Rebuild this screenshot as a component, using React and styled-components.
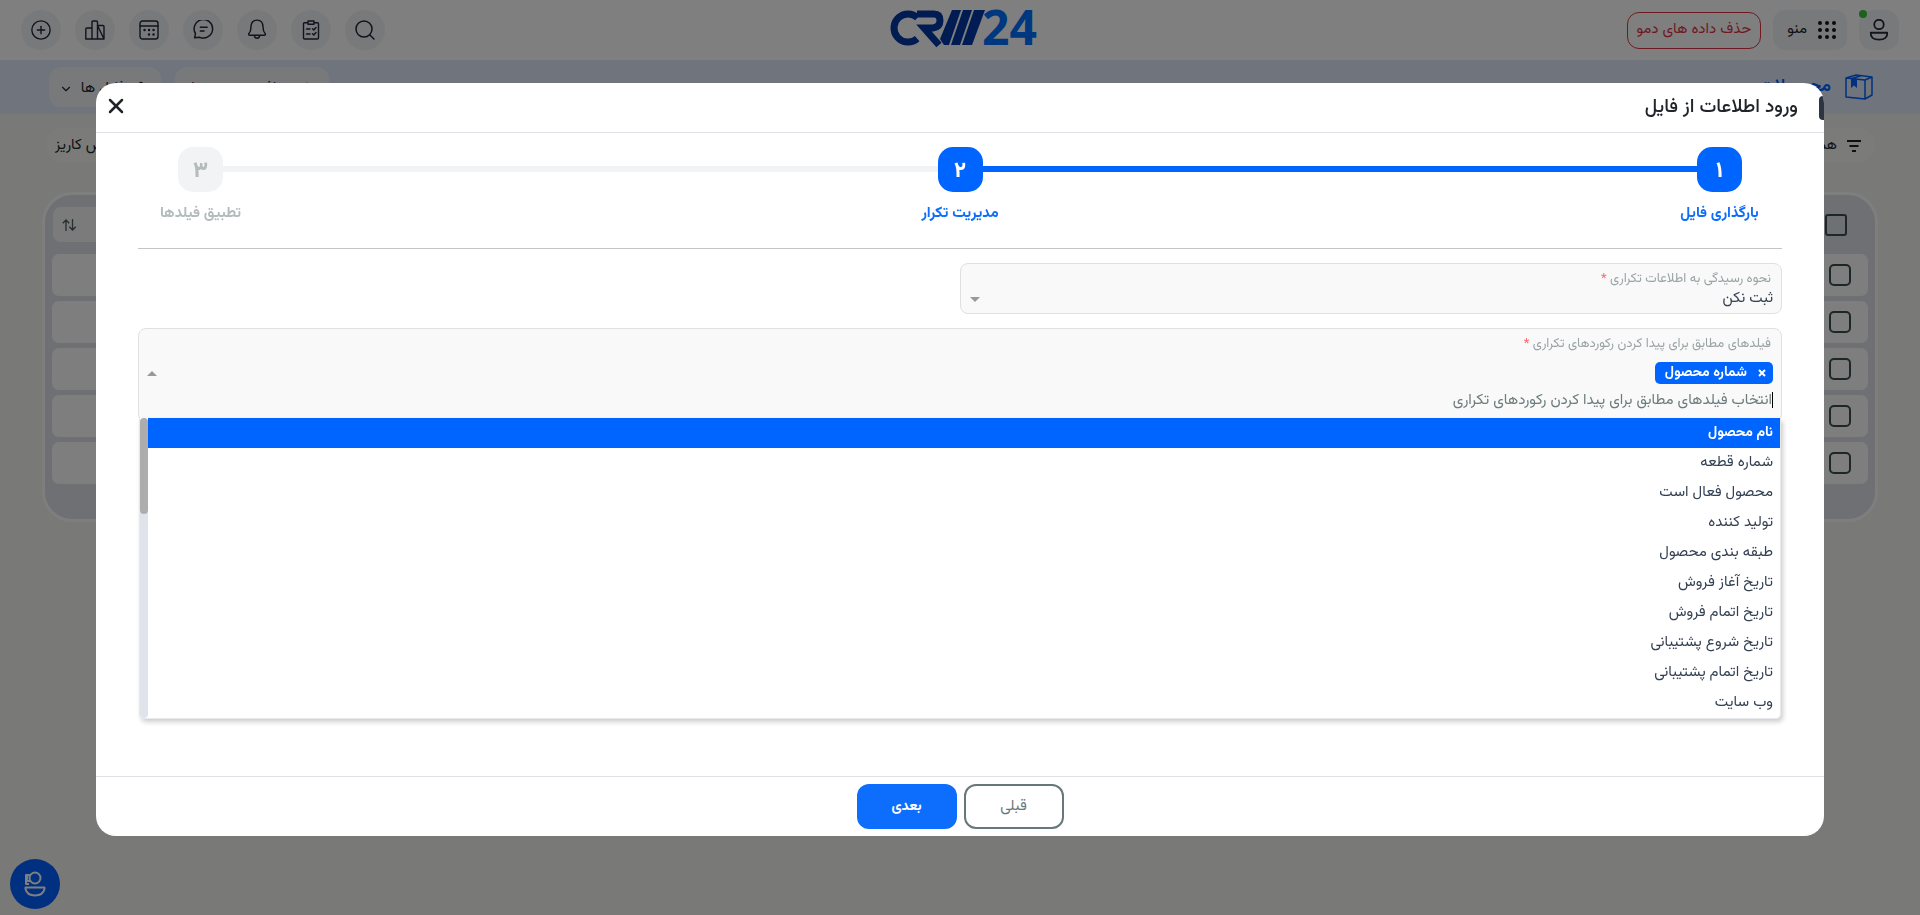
import React from "react";
import styled, { createGlobalStyle, css } from "styled-components";
import { Search, CirclePlus, ChevronDown, Settings, Plus, X } from "lucide-react";

const GlobalStyle = createGlobalStyle`
  *, *::before, *::after { box-sizing: border-box; }
  html { background: #f3f2ee; }
  body {
    margin: 0;
    overflow: hidden;
    color: #212529;
    font: 400 15px/20px Vazirmatn, "DejaVu Sans", sans-serif;
  }
  button, input, select { font: inherit; color: inherit; margin: 0; }
  button { cursor: pointer; }
`;

/* ---------- page behind the dialog ---------- */

const TopBar = styled.header`
  display: grid;
  grid-template-columns: 1fr auto 1fr;
  align-items: center;
  height: 60px;
  padding: 0 21px;
  background: #fff;
`;

const BarGroup = styled.div`
  display: flex;
  align-items: center;
  gap: ${(p) => (p.$tight ? 12 : 14)}px;
  justify-content: ${(p) => (p.$end ? "flex-end" : "flex-start")};
`;

const IconButton = styled.button`
  position: relative;
  display: grid;
  place-items: center;
  width: 40px;
  height: 40px;
  padding: 0;
  border: 0;
  border-radius: ${(p) => (p.$square ? 14 : 20)}px;
  background: #f1f3f6;
  color: #22263a;
`;

const OnlineDot = styled.span`
  position: absolute;
  top: 0;
  left: 0;
  width: 8px;
  height: 8px;
  border-radius: 50%;
  background: #38c43a;
`;

const MenuButton = styled.button`
  display: flex;
  align-items: center;
  gap: 11px;
  height: 40px;
  padding: 0 11px 0 14px;
  border: 0;
  border-radius: 12px;
  background: #f1f3f6;
`;

const DangerButton = styled.button`
  height: 37px;
  padding: 0 9px;
  border: 1px solid #dc3545;
  border-radius: 12px;
  background: transparent;
  color: #dc3545;
`;

const TitleBand = styled.div`
  display: flex;
  align-items: center;
  justify-content: space-between;
  height: 54px;
  padding: 0 47px 0 49px;
  background: #e0e9fb;
`;

const PageTitle = styled.h1`
  display: flex;
  align-items: center;
  gap: 14px;
  margin: 0;
  color: #0060ff;
  font-size: 18px;
  font-weight: 600;
`;

const BandButton = styled.button`
  display: flex;
  align-items: center;
  justify-content: space-between;
  height: 40px;
  min-width: ${(p) => (p.$wide ? 154 : 112)}px;
  padding: 4px 12px 0 10px;
  border: 0;
  border-radius: 12px;
  background: #eff3f5;
`;

const FilterRow = styled.div`
  display: flex;
  justify-content: space-between;
  padding: 14px 45px 29px 46px;
`;

const Pill = styled.button`
  display: flex;
  align-items: center;
  gap: 10px;
  height: 35px;
  padding: 0 ${(p) => (p.$filter ? 14 : 9)}px;
  border: 0;
  border-radius: 18px;
  background: #f7f7f3;
`;

const TablePanel = styled.section`
  margin: 0 42px;
  padding: 7px 7px 30px;
  border: 3px solid #fdfdfd;
  border-radius: 30px;
  background: #dfe1e6;
`;

const RecordTable = styled.table`
  width: 100%;
  border-collapse: separate;
  border-spacing: 0 5px;
`;

const HeadCell = styled.th`
  height: 42px;
  padding: ${(p) => (p.$check ? "0 21px 7px 0" : "0 0 7px 1px")};
  width: ${(p) => (p.$check ? "60px" : "auto")};
  text-align: start;
`;

const HeadLabel = styled.div`
  display: flex;
  align-items: center;
  justify-content: flex-end;
  height: 35px;
  padding: 0 9px;
  border-radius: 8px;
  background: #f6f7f8;
`;

const BodyCell = styled.td`
  height: 42px;
  padding: 0 17px 0 0;
  background: #fdfdfd;
  &:first-child { border-radius: 0 7px 7px 0; }
  &:last-child { border-radius: 7px 0 0 7px; }
`;

const RowCheck = styled.input`
  appearance: none;
  display: block;
  width: 22px;
  height: 22px;
  margin: 0;
  border: 2px solid #38504e;
  border-radius: ${(p) => (p.$head ? 3 : 5)}px;
`;

const HelpButton = styled.button`
  position: fixed;
  left: 10px;
  bottom: 6px;
  display: grid;
  place-items: center;
  width: 50px;
  height: 50px;
  padding: 0;
  border: 0;
  border-radius: 50%;
  background: #0060ff;
  color: #fff;
`;

/* ---------- dialog ---------- */

const Backdrop = styled.div`
  position: fixed;
  inset: 0;
  padding: 83px 5% 0;
  background: rgba(0, 0, 0, 0.5);
`;

const Dialog = styled.section`
  position: relative;
  overflow: hidden;
  border-radius: 20px;
  background: #fff;
`;

const EdgeTooltip = styled.span`
  position: absolute;
  top: 13px;
  right: 0;
  width: 5px;
  height: 24px;
  border-radius: 4px 0 0 4px;
  background: #2f3441;
`;

const DialogHeader = styled.header`
  display: flex;
  align-items: center;
  justify-content: space-between;
  height: 50px;
  padding: 0 26px 0 6px;
  border-bottom: 1px solid #dee2e6;
`;

const DialogTitle = styled.h2`
  margin: 0;
  font-size: 19px;
  font-weight: 500;
`;

const CloseButton = styled.button`
  display: grid;
  place-items: center;
  width: 28px;
  height: 28px;
  padding: 0 0 4px;
  border: 0;
  background: none;
`;

const DialogBody = styled.form`
  padding: 14px 42px 57px;
`;

const StepList = styled.ol`
  display: flex;
  margin: 0 0 14px;
  padding: 0 0 22px;
  list-style: none;
  border-bottom: 1px solid #c4c4c4;
`;

const Step = styled.li`
  display: flex;
  flex-direction: column;
  align-items: center;
  gap: 10px;
  width: 125px;
  color: ${(p) => (p.$active ? "#0d6efd" : "#b4bbbd")};
  font-weight: 700;
  line-height: 24px;
`;

const StepNumber = styled.span`
  display: grid;
  place-items: center;
  width: 45px;
  height: 45px;
  padding-top: 4px;
  border-radius: 15px;
  font-size: 22px;
  font-weight: 800;
  ${(p) =>
    p.$active
      ? css`background: #0065ff; color: #fff;`
      : css`background: #f1f3f5; color: #b4bbbd;`}
`;

const StepLine = styled.li`
  flex: 1;
  height: 6px;
  margin: 19px -40px 0;
  background: ${(p) => (p.$active ? "#0065ff" : "#f1f3f5")};
`;

const fieldBox = css`
  border: 1px solid #dee0e4;
  border-radius: 8px;
  background: #f9f9f9;
`;

const SelectField = styled.div`
  ${fieldBox}
  display: grid;
  grid-template-rows: 20px 20px;
  width: 50%;
  height: 51px;
  margin-bottom: 14px;
  padding: 5px 8px 4px 9px;
`;

const FieldLabel = styled.label`
  display: block;
  padding-right: 2px;
  color: #9aa3a5;
  font-size: 13px;
  line-height: 20px;
`;

const Required = styled.span`
  color: #f66;
`;

const SelectLine = styled.div`
  display: flex;
  align-items: center;
  justify-content: space-between;
`;

const Select = styled.select`
  appearance: none;
  flex: 1;
  height: 20px;
  padding: 0;
  border: 0;
  background: transparent;
  color: #344154;
  line-height: 20px;
`;

const Arrow = styled.span`
  width: 0;
  height: 0;
  border: 5px solid transparent;
  ${(p) =>
    p.$up
      ? css`border-top: 0; border-bottom-color: #999;`
      : css`border-bottom: 0; border-top-color: #999;`}
`;

const MultiField = styled.div`
  ${fieldBox}
  display: flex;
  align-items: center;
  height: 94px;
  padding: 5px 8px 9px;
`;

const MultiMain = styled.div`
  flex: 1;
`;

const Tag = styled.span`
  display: flex;
  align-items: center;
  gap: 11px;
  width: fit-content;
  height: 22px;
  margin: 8px 0 4px;
  padding: 0 7px 0 10px;
  border-radius: 5px;
  background: #0065ff;
  color: #fff;
  font-size: 14px;
  font-weight: 700;
`;

const TagRemove = styled.button`
  display: grid;
  place-items: center;
  width: 8px;
  height: 20px;
  padding: 0;
  border: 0;
  background: none;
  color: inherit;
`;

const SearchLine = styled.div`
  display: flex;
  align-items: center;
`;

const Cursor = styled.span`
  width: 1px;
  height: 16px;
  background: #000;
`;

const SearchInput = styled.input`
  flex: 1;
  height: 24px;
  padding: 0;
  border: 0;
  outline: 0;
  background: transparent;
  &::placeholder { color: #6c7b7b; opacity: 1; }
`;

const Dropdown = styled.div`
  position: relative;
  display: flex;
  margin: -4px 1px 0;
  border: solid #e8e8ea;
  border-width: 0 1px 1px;
  border-radius: 0 0 5px 5px;
  background: #fff;
  box-shadow: 2px 3px 5px rgba(0, 0, 0, 0.2);
`;

const OptionList = styled.ul`
  flex: 1;
  margin: 0;
  padding: 0;
  list-style: none;
`;

const Option = styled.li`
  padding: 0 7px;
  line-height: 30px;
  color: #344154;
  ${(p) =>
    p.$current &&
    css`
      background: #0065ff;
      color: #fff;
      font-size: 14px;
      font-weight: 700;
    `}
`;

const ScrollTrack = styled.div`
  width: 8px;
  border-radius: 4px;
  background: #e0e3e9;
`;

const ScrollThumb = styled.div`
  height: 32%;
  border-radius: 4px;
  background: #adadad;
`;

const DialogFooter = styled.footer`
  display: flex;
  justify-content: center;
  gap: 7px;
  padding: 7px;
  border-top: 1px solid #dee2e6;
`;

const FooterButton = styled.button`
  width: 100px;
  height: 45px;
  border-radius: 12px;
  ${(p) =>
    p.$primary
      ? css`border: 0; background: #0d6efd; color: #fff; font-size: 14px; font-weight: 700;`
      : css`border: 2px solid #667877; background: #fff; color: #6a7877;`}
`;

/* ---------- drawings ---------- */

const Svg = ({ size = 20, w = 1.5, children }) => (
  <svg width={size} height={size} viewBox="0 0 20 20" fill="none" stroke="currentColor" strokeWidth={w} strokeLinecap="round" strokeLinejoin="round" aria-hidden="true">
    {children}
  </svg>
);

const ChartIcon = () => (
  <Svg w={1.4}>
    <path d="M.8 19V9Q.8 8 1.800 8H7V19M7 19V2Q7 1 8 1H11.500Q12.500 1 12.500 2V19M12.500 5.500H18Q19 5.500 19 6.500V19ZM.8 19H19" />
  </Svg>
);

const CalendarIcon = () => (
  <Svg w={1.4}>
    <rect x="1" y="1" width="18" height="18" rx="2.500" />
    <path d="M1 6H19" />
    <path d="M5.500 10h.1M10 10h.1M14.500 10h.1M10 14.500h.1M14.500 14.500h.1" strokeWidth="2.400" />
  </Svg>
);

const ChatIcon = () => (
  <Svg size={21} w={1.4}>
    <path d="M1.500 17 2.400 13A8.800 8.800 0 1 1 6.500 16.500ZM7 7H13.500M7 10.500H10.500" />
  </Svg>
);

const TasksIcon = () => (
  <Svg w={1.4}>
    <path d="M6 2.800H3.500Q2.500 2.800 2.500 3.800V18Q2.500 19 3.500 19H16.500Q17.500 19 17.500 18V3.800Q17.500 2.800 16.500 2.800H14M7 1H13V4.300H7Z" />
    <path d="M5.500 9H9M5.500 14H9M11.500 8.800 12.800 10 15 7.500M11.500 13.800 12.800 15 15 12.500" />
  </Svg>
);

const BellIcon = () => (
  <Svg size={22} w={1.3}>
    <path d="M2.500 13.500Q4.500 11.500 4.500 7.500Q4.500 1 10 1T15.500 7.500Q15.500 11.500 17.500 13.500Q18 14.800 16.500 14.800H3.500Q2 14.800 2.500 13.500ZM7.500 15Q8 17.500 10 17.500T12.500 15" />
  </Svg>
);

const UserIcon = () => (
  <Svg size={22} w={1.600}>
    <circle cx="10" cy="5" r="4.300" />
    <path d="M2.500 12.500H17.500Q18 18.800 10 18.800T2.500 12.500Z" />
  </Svg>
);

const GridIcon = () => (
  <svg width="18" height="18" viewBox="0 0 18 18" fill="#151515" aria-hidden="true">
    {[2, 9, 16].map((y) => [2, 9, 16].map((x) => <circle key={`${x}-${y}`} cx={x} cy={y} r="2" />))}
  </svg>
);

const FilterIcon = () => (
  <svg width="14" height="12" viewBox="0 0 14 12" stroke="#222" strokeWidth="2" aria-hidden="true">
    <path d="M0 1H14M2.500 6H11.500M5 11H9" />
  </svg>
);

const BoxIcon = () => (
  <svg width="28" height="26" viewBox="0 0 28 26" fill="none" stroke="#0060ff" strokeWidth="1.500" strokeLinejoin="round" aria-hidden="true">
    <path d="M1 4 11 1 27 3V21L20 25 1 23ZM1 4 20 6 27 3M20 6V25M7 4.500 16 1.800" />
    <path d="M6 5H12V14L9 11.500 6 14Z" fill="#0060ff" stroke="none" />
  </svg>
);

const BotIcon = () => (
  <svg width="22" height="26" viewBox="0 0 22 26" fill="none" stroke="#fff" strokeWidth="2" strokeLinejoin="round" aria-hidden="true">
    <circle cx="11" cy="7" r="5.500" />
    <path d="M6 4H2V13H5M3 4V10H6M1.500 16.500H20.500V18Q19 24.500 11 24.500T1.500 18Z" />
  </svg>
);

const SortIcon = () => (
  <svg width="14" height="12" viewBox="0 0 14 12" fill="none" stroke="#4c5c60" strokeWidth="1.300" aria-hidden="true">
    <path d="M4 12V1M.8 4.200 4 1 7.200 4.200M10.500 0V11M7.300 7.800 10.500 11 13.700 7.800" />
  </svg>
);

const LogoSvg = styled.svg`
  direction: ltr;
  overflow: visible;
`;

const Logo = () => (
  <LogoSvg width="156" height="40" viewBox="-8 0 156 40" role="img" aria-label="CRM24">
    <g fill="none" stroke="#0038a4" strokeWidth="7">
      <circle cx="18" cy="18" r="14" strokeDasharray="64 24" transform="rotate(49 18 18)" />
      <path d="M27 4H44Q50 4 50 10.500T43 18H34L49 35" />
    </g>
    <g fill="#0038a4">
      <path d="M62 0H71L59 35H54L50 29Z" />
      <path d="M73 0H82L70 35H61Z" />
      <path d="M84 0H95L82 35H72Z" />
    </g>
    <text x="92" y="35" fill="#0070ff" fontFamily="Open Sans, Noto Sans, sans-serif" fontWeight="700" fontSize="48">24</text>
  </LogoSvg>
);

/* ---------- data ---------- */

const steps = [
  { number: "۱", label: "بارگذاری فایل", active: true },
  { number: "۲", label: "مدیریت تکرار", active: true },
  { number: "۳", label: "تطبیق فیلدها", active: false },
];

const options = [
  "نام محصول",
  "شماره قطعه",
  "محصول فعال است",
  "تولید کننده",
  "طبقه بندی محصول",
  "تاریخ آغاز فروش",
  "تاریخ اتمام فروش",
  "تاریخ شروع پشتیبانی",
  "تاریخ اتمام پشتیبانی",
  "وب سایت",
];

const tools = [
  { name: "جستجو", icon: <Search size={24} strokeWidth={1.500} /> },
  { name: "وظایف", icon: <TasksIcon /> },
  { name: "اعلان ها", icon: <BellIcon /> },
  { name: "پیام ها", icon: <ChatIcon /> },
  { name: "تقویم", icon: <CalendarIcon /> },
  { name: "گزارش ها", icon: <ChartIcon /> },
  { name: "افزودن", icon: <CirclePlus size={22} strokeWidth={1.500} /> },
];

function RecordsPage() {
  return (
    <>
      <TopBar>
        <BarGroup $tight>
          <IconButton $square aria-label="حساب کاربری">
            <UserIcon />
            <OnlineDot />
          </IconButton>
          <MenuButton>
            <GridIcon />
            منو
          </MenuButton>
          <DangerButton>حذف داده های دمو</DangerButton>
        </BarGroup>
        <Logo />
        <BarGroup $end>
          {tools.map((t) => (
            <IconButton key={t.name} aria-label={t.name}>
              {t.icon}
            </IconButton>
          ))}
        </BarGroup>
      </TopBar>
      <TitleBand>
        <PageTitle>
          <BoxIcon />
          محصولات
        </PageTitle>
        <BarGroup>
          <BandButton $wide>
            <Plus size={20} strokeWidth={1.500} />
            افزودن محصول
          </BandButton>
          <BandButton>
            <Settings size={16} />
            فایل ها
            <ChevronDown size={14} />
          </BandButton>
        </BarGroup>
      </TitleBand>
      <FilterRow>
        <Pill $filter>
          <FilterIcon />
          همه
        </Pill>
        <Pill>نمایش کاریز</Pill>
      </FilterRow>
      <TablePanel>
        <RecordTable>
          <thead>
            <tr>
              <HeadCell $check>
                <RowCheck $head type="checkbox" aria-label="انتخاب همه" />
              </HeadCell>
              <HeadCell>
                <HeadLabel>
                  <SortIcon />
                </HeadLabel>
              </HeadCell>
            </tr>
          </thead>
          <tbody>
            {[1, 2, 3, 4, 5].map((n) => (
              <tr key={n}>
                <BodyCell>
                  <RowCheck type="checkbox" aria-label={`انتخاب ردیف ${n}`} />
                </BodyCell>
                <BodyCell />
              </tr>
            ))}
          </tbody>
        </RecordTable>
      </TablePanel>
      <HelpButton aria-label="دستیار">
        <BotIcon />
      </HelpButton>
    </>
  );
}

function ImportDialog() {
  return (
    <Backdrop>
      <Dialog role="dialog" aria-modal="true" aria-labelledby="import-title">
        <DialogHeader>
          <DialogTitle id="import-title">ورود اطلاعات از فایل</DialogTitle>
          <CloseButton aria-label="بستن">
            <X size={24} strokeWidth={2.500} />
          </CloseButton>
        </DialogHeader>
        <EdgeTooltip />
        <DialogBody id="import-form">
          <StepList>
            {steps.map((s, i) => (
              <React.Fragment key={s.number}>
                {i > 0 && <StepLine $active={s.active} aria-hidden="true" />}
                <Step $active={s.active}>
                  <StepNumber $active={s.active}>{s.number}</StepNumber>
                  {s.label}
                </Step>
              </React.Fragment>
            ))}
          </StepList>
          <SelectField>
            <FieldLabel htmlFor="duplicate-mode">
              نحوه رسیدگی به اطلاعات تکراری <Required>*</Required>
            </FieldLabel>
            <SelectLine>
              <Select id="duplicate-mode" defaultValue="skip">
                <option value="skip">ثبت نکن</option>
              </Select>
              <Arrow />
            </SelectLine>
          </SelectField>
          <MultiField>
            <MultiMain>
              <FieldLabel htmlFor="match-fields">
                فیلدهای مطابق برای پیدا کردن رکوردهای تکراری <Required>*</Required>
              </FieldLabel>
              <Tag>
                <TagRemove type="button" aria-label="حذف شماره محصول">
                  <svg width="8" height="8" viewBox="0 0 8 8" stroke="currentColor" strokeWidth="2" aria-hidden="true">
                    <path d="M1 1 7 7M7 1 1 7" />
                  </svg>
                </TagRemove>
                شماره محصول
              </Tag>
              <SearchLine>
                <Cursor />
                <SearchInput id="match-fields" placeholder="انتخاب فیلدهای مطابق برای پیدا کردن رکوردهای تکراری" />
              </SearchLine>
            </MultiMain>
            <Arrow $up />
          </MultiField>
          <Dropdown>
            <OptionList role="listbox" aria-label="فیلدهای مطابق">
              {options.map((o, i) => (
                <Option key={o} role="option" aria-selected={i === 0} $current={i === 0}>
                  {o}
                </Option>
              ))}
            </OptionList>
            <ScrollTrack>
              <ScrollThumb />
            </ScrollTrack>
          </Dropdown>
        </DialogBody>
        <DialogFooter>
          <FooterButton type="button">قبلی</FooterButton>
          <FooterButton $primary type="submit" form="import-form">بعدی</FooterButton>
        </DialogFooter>
      </Dialog>
    </Backdrop>
  );
}

export default function App() {
  return (
    <main dir="rtl">
      <GlobalStyle />
      <RecordsPage />
      <ImportDialog />
    </main>
  );
}
